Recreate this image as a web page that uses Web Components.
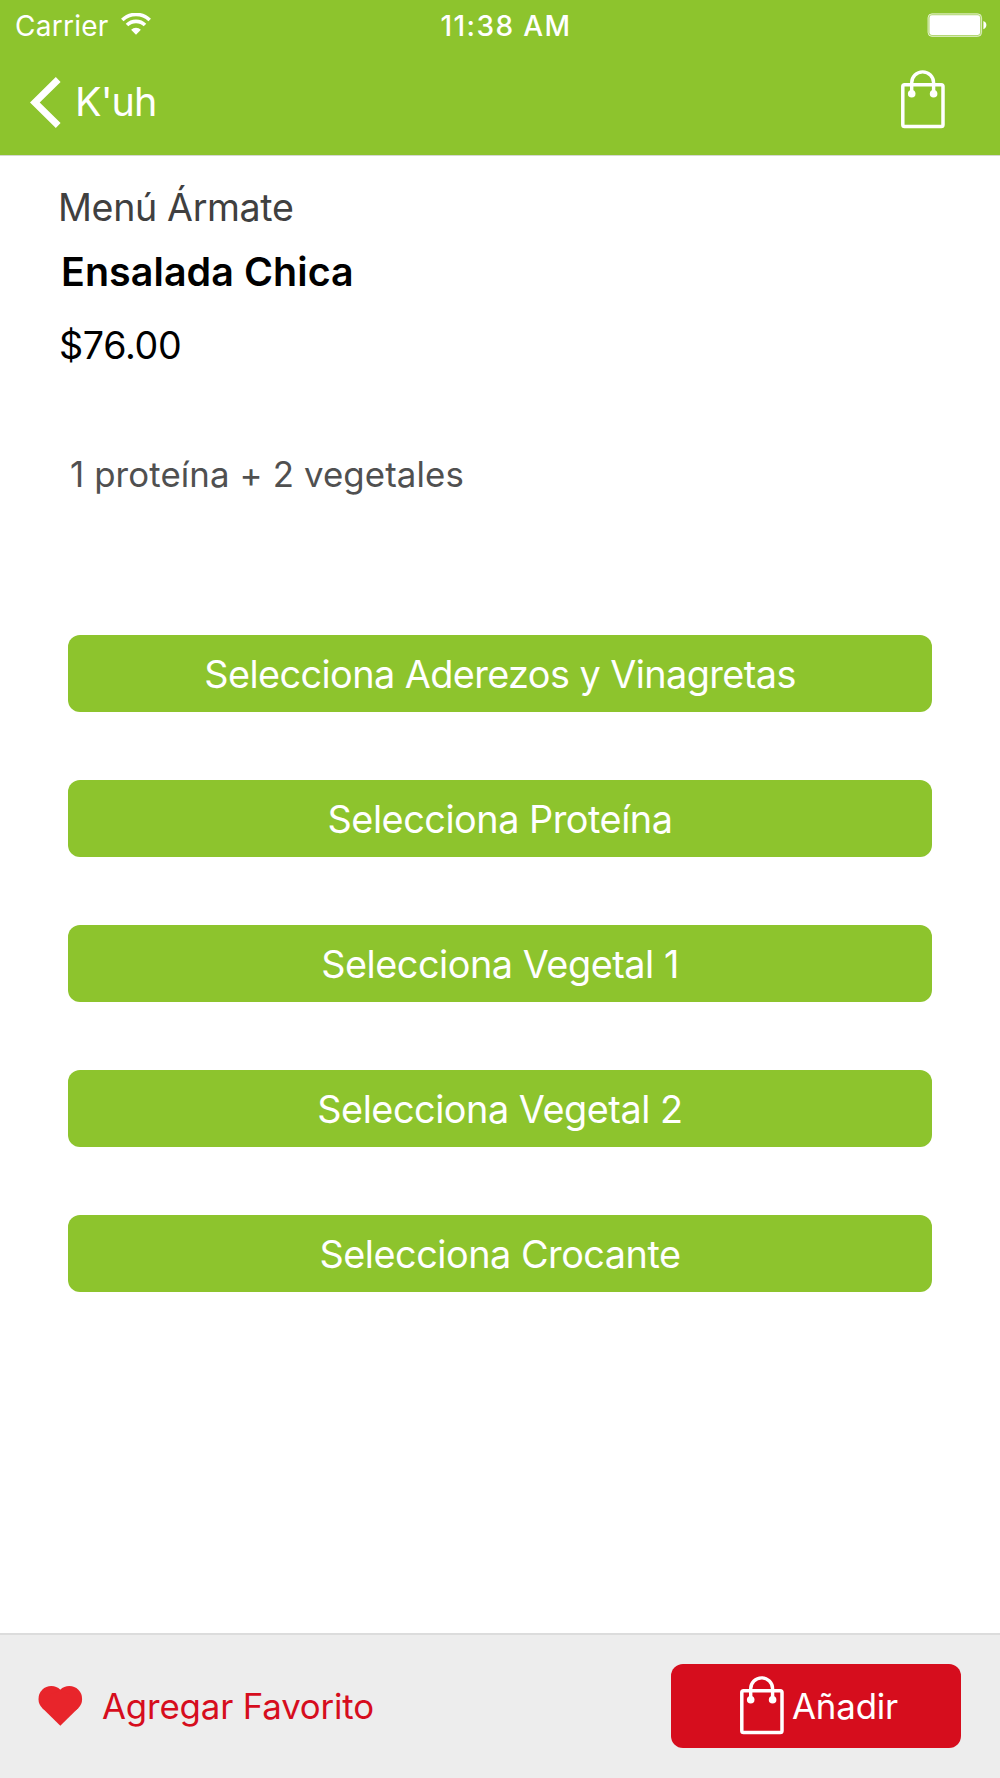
<!DOCTYPE html>
<html lang="es">
<head>
<meta charset="utf-8">
<title>K'uh</title>
<style>
  body {
    margin: 0;
    background: #fff;
    font-family: Inter, "Liberation Sans", sans-serif;
    font-weight: 400;
    --green: #8dc42d;
    --red: #d60d1d;
  }
</style>
</head>
<body>
<order-screen></order-screen>

<script>
class BagIcon extends HTMLElement {
  connectedCallback() {
    this.attachShadow({ mode: 'open' });
    this.shadowRoot.innerHTML = `
      <style>
        :host { display: block; width: 44px; height: 59px; flex: none; }
        svg { display: block; }
      </style>
      <svg width="44" height="59" viewBox="0 0 44 59" fill="none" stroke="#fff">
        <rect x="1.8" y="14.7" width="40.2" height="41.8" rx="1.8" stroke-width="3.5"/>
        <path d="M10.7 23.8V12.8a10.95 10.95 0 0 1 21.9 0v11" stroke-width="3.4"/>
        <circle cx="10.7" cy="23.8" r="3.8" fill="#fff" stroke="none"/>
        <circle cx="32.6" cy="23.8" r="3.8" fill="#fff" stroke="none"/>
      </svg>
    `;
  }
}
customElements.define('bag-icon', BagIcon);

class StatusBar extends HTMLElement {
  connectedCallback() {
    this.attachShadow({ mode: 'open' });
    this.shadowRoot.innerHTML = `
      <style>
        :host {
          display: grid;
          grid-template-columns: 1fr auto 1fr;
          align-items: center;
          height: 51px;
          padding: 0 13px 0 15px;
          color: #fff;
          font-size: 28px;
          line-height: 34px;
        }
        .carrier {
          display: flex;
          align-items: center;
          gap: 12px;
          letter-spacing: 0.25px;
        }
        .wifi { margin-bottom: 3px; }
        .time {
          padding-left: 10px;
          font-weight: 500;
          letter-spacing: 1.4px;
        }
        .battery { justify-self: end; margin-bottom: 2px; }
        svg { display: block; }
      </style>
      <div class="carrier">
        <span>Carrier</span>
        <svg class="wifi" width="30" height="22" viewBox="0 0 30 22" fill="none" stroke="#fff" stroke-width="3.6">
          <path d="M1.3 7a19.6 19.6 0 0 1 27.4 0"/>
          <path d="M6 12.1a12.7 12.7 0 0 1 18 0"/>
          <path d="M15 21.8l-4.9-5a7 7 0 0 1 9.8 0z" fill="#fff" stroke="none"/>
        </svg>
      </div>
      <div class="time">11:38 AM</div>
      <svg class="battery" width="60" height="24" viewBox="0 0 60 24">
        <rect x="1" y="0.8" width="53.6" height="22.6" rx="4" fill="#fff" fill-opacity=".3" stroke="#fff" stroke-opacity=".65" stroke-width="1"/>
        <rect x="2.5" y="2.3" width="50.6" height="19.6" rx="2.4" fill="#fff"/>
        <path d="M56.4 8c4 1.2 4 7 0 8.2z" fill="#fff"/>
      </svg>
    `;
  }
}
customElements.define('status-bar', StatusBar);

class NavBar extends HTMLElement {
  connectedCallback() {
    this.attachShadow({ mode: 'open' });
    this.shadowRoot.innerHTML = `
      <style>
        :host {
          display: flex;
          justify-content: space-between;
          align-items: center;
          height: 102px;
          padding: 0 55px 0 30px;
          box-sizing: border-box;
          color: #fff;
        }
        .back {
          display: flex;
          align-items: center;
          gap: 14px;
          font-size: 39.5px;
          line-height: 50px;
          letter-spacing: -0.9px;
        }
        .back svg { display: block; }
        bag-icon { margin-bottom: 5px; }
      </style>
      <div class="back">
        <svg width="31" height="51" viewBox="0 0 31 51" fill="none" stroke="#fff" stroke-width="6.8">
          <path d="M28.2 2.5L4.8 25.5l23.4 23"/>
        </svg>
        <slot></slot>
      </div>
      <bag-icon></bag-icon>
    `;
  }
}
customElements.define('nav-bar', NavBar);

class OptionButton extends HTMLElement {
  connectedCallback() {
    this.attachShadow({ mode: 'open' });
    this.shadowRoot.innerHTML = `
      <style>
        :host {
          display: flex;
          justify-content: center;
          align-items: center;
          height: 77px;
          border-radius: 12px;
          background: var(--green);
          color: #fff;
          font-size: 37.8px;
          line-height: 48px;
          letter-spacing: -0.47px;
        }
      </style>
      <slot></slot>
    `;
  }
}
customElements.define('option-button', OptionButton);

class DishInfo extends HTMLElement {
  connectedCallback() {
    this.attachShadow({ mode: 'open' });
    this.shadowRoot.innerHTML = `
      <style>
        :host {
          display: block;
          padding: 27px 58px 0;
          line-height: 50px;
          font-size: 37.6px;
          color: #000;
        }
        .menu { color: #404040; letter-spacing: -0.35px; }
        .name {
          margin: 14px 0 0 3px;
          font-size: 39.4px;
          font-weight: 600;
          letter-spacing: 0.08px;
        }
        .price { margin: 24px 0 0 1px; letter-spacing: -0.28px; }
        .description {
          margin: 78px 0 0 12px;
          font-size: 34.8px;
          color: #505050;
          letter-spacing: 0.12px;
        }
      </style>
      <div class="menu"><slot name="menu"></slot></div>
      <div class="name"><slot name="name"></slot></div>
      <div class="price"><slot name="price"></slot></div>
      <div class="description"><slot name="description"></slot></div>
    `;
  }
}
customElements.define('dish-info', DishInfo);

class ActionBar extends HTMLElement {
  connectedCallback() {
    this.attachShadow({ mode: 'open' });
    this.shadowRoot.innerHTML = `
      <style>
        :host {
          display: flex;
          justify-content: space-between;
          align-items: center;
          height: 145px;
          padding: 0 39px 2px 38px;
          box-sizing: border-box;
          background: #ededed;
          border-top: 2px solid #dcdcdc;
          font-size: 34.8px;
          line-height: 44px;
          letter-spacing: -0.15px;
        }
        .favorite {
          display: flex;
          align-items: center;
          gap: 19px;
          color: var(--red);
        }
        svg { display: block; }
        .add {
          display: flex;
          align-items: center;
          gap: 8px;
          width: 290px;
          height: 84px;
          padding-left: 69px;
          box-sizing: border-box;
          border-radius: 12px;
          background: var(--red);
          color: #fff;
        }
      </style>
      <div class="favorite">
        <svg width="45" height="40" viewBox="0 0 45 40" fill="#e8252b">
          <circle cx="13.3" cy="12.9" r="12.8"/>
          <circle cx="31.3" cy="12.9" r="12.8"/>
          <path d="M22.3 39.8L4.25 21.95 13.3 8l9-3.6 9 3.6 9.05 13.95z"/>
        </svg>
        <span>Agregar Favorito</span>
      </div>
      <div class="add">
        <bag-icon></bag-icon>
        <span>Añadir</span>
      </div>
    `;
  }
}
customElements.define('action-bar', ActionBar);

class OrderScreen extends HTMLElement {
  connectedCallback() {
    this.attachShadow({ mode: 'open' });
    this.shadowRoot.innerHTML = `
      <style>
        :host {
          display: flex;
          flex-direction: column;
          width: 1000px;
          height: 1778px;
        }
        header {
          height: 156px;
          box-sizing: border-box;
          background: var(--green);
          border-bottom: 1px solid #d5d8d0;
        }
        main { flex: 1; }
        .options {
          display: flex;
          flex-direction: column;
          gap: 68px;
          margin: 136px 68px 0;
        }
        .long { letter-spacing: -0.57px; }
      </style>
      <header>
        <status-bar></status-bar>
        <nav-bar>K'uh</nav-bar>
      </header>
      <main>
        <dish-info>
          <span slot="menu">Menú Ármate</span>
          <span slot="name">Ensalada Chica</span>
          <span slot="price">$76.00</span>
          <span slot="description">1 proteína + 2 vegetales</span>
        </dish-info>
        <div class="options">
          <option-button class="long">Selecciona Aderezos y Vinagretas</option-button>
          <option-button>Selecciona Proteína</option-button>
          <option-button>Selecciona Vegetal 1</option-button>
          <option-button>Selecciona Vegetal 2</option-button>
          <option-button>Selecciona Crocante</option-button>
        </div>
      </main>
      <action-bar></action-bar>
    `;
  }
}
customElements.define('order-screen', OrderScreen);
</script>
</body>
</html>
